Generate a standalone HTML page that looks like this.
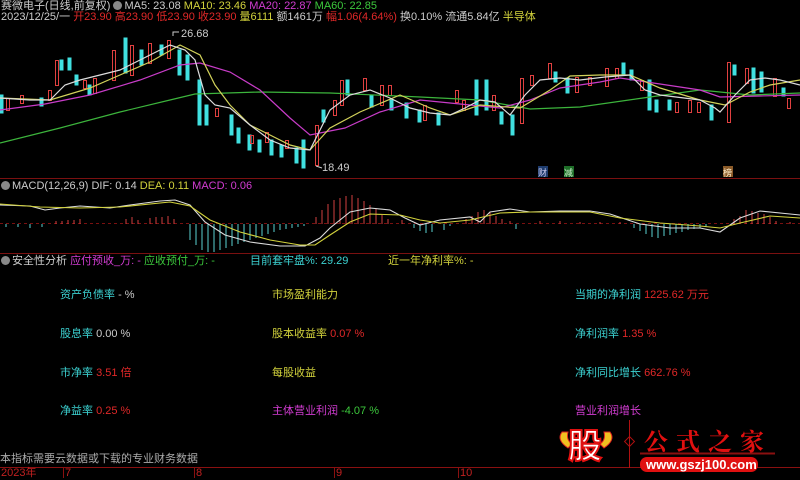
<!DOCTYPE html>
<html><head><meta charset="utf-8"><style>
*{margin:0;padding:0}
body{width:800px;height:478px;background:#000;overflow:hidden;position:relative;font-family:"Liberation Sans","Noto Sans CJK SC",sans-serif;font-size:11px;color:#ccc}
.t{position:absolute;white-space:nowrap;line-height:13px}
.c{color:#3cd2d2}.y{color:#d2d23c}.r{color:#e02828}.m{color:#d23cd2}.g{color:#3cc83c}.w{color:#ccc}
.d{display:inline-block;width:9px;height:9px;border-radius:50%;background:#888;vertical-align:-1px;margin-right:2px}
</style></head><body>
<svg width="800" height="478" style="position:absolute;left:0;top:0">
<line x1="0" y1="178.5" x2="800" y2="178.5" stroke="#7a1010"/>
<line x1="0" y1="253.5" x2="800" y2="253.5" stroke="#7a1010"/>
<line x1="0" y1="467.5" x2="800" y2="467.5" stroke="#8a1010"/>
<g stroke="#8a1010"><line x1="63.5" y1="467" x2="63.5" y2="478"/><line x1="194.5" y1="467" x2="194.5" y2="478"/><line x1="334.5" y1="467" x2="334.5" y2="478"/><line x1="458.5" y1="467" x2="458.5" y2="478"/></g>
<!-- candles -->
<g stroke-width="1">
<g fill="#40e0e0" stroke="#40e0e0">
<rect x="0" y="95" width="3" height="18"/><rect x="40" y="98" width="3" height="8"/><rect x="60" y="60" width="3" height="10"/><rect x="68" y="58" width="3" height="12"/>
<rect x="75" y="75" width="3" height="10"/><rect x="88" y="85" width="3" height="10"/><rect x="124" y="38" width="3" height="35"/><rect x="140" y="50" width="3" height="15"/>
<rect x="160" y="45" width="3" height="10"/><rect x="178" y="50" width="3" height="25"/><rect x="186" y="55" width="3" height="25"/><rect x="198" y="80" width="3" height="45"/>
<rect x="205" y="105" width="3" height="20"/><rect x="230" y="115" width="3" height="20"/><rect x="237" y="128" width="3" height="15"/><rect x="248" y="135" width="3" height="15"/>
<rect x="258" y="140" width="3" height="12"/><rect x="270" y="140" width="3" height="15"/><rect x="280" y="145" width="3" height="12"/><rect x="295" y="148" width="3" height="15"/>
<rect x="302" y="140" width="3" height="28"/><rect x="322" y="110" width="3" height="12"/><rect x="346" y="80" width="3" height="15"/><rect x="370" y="95" width="3" height="12"/>
<rect x="390" y="100" width="3" height="10"/><rect x="405" y="103" width="3" height="15"/><rect x="418" y="110" width="3" height="12"/><rect x="437" y="113" width="3" height="12"/>
<rect x="475" y="80" width="3" height="35"/><rect x="485" y="80" width="3" height="30"/><rect x="500" y="112" width="3" height="12"/><rect x="511" y="115" width="3" height="20"/>
<rect x="554" y="72" width="3" height="10"/><rect x="566" y="78" width="3" height="15"/><rect x="622" y="63" width="3" height="12"/><rect x="630" y="70" width="3" height="10"/>
<rect x="648" y="80" width="3" height="30"/><rect x="655" y="100" width="3" height="12"/><rect x="668" y="100" width="3" height="10"/><rect x="710" y="105" width="3" height="15"/>
<rect x="733" y="65" width="3" height="10"/><rect x="752" y="68" width="3" height="25"/><rect x="760" y="72" width="3" height="20"/><rect x="782" y="88" width="3" height="8"/>
</g>
<g fill="none" stroke="#e04040">
<rect x="6.5" y="98.5" width="3" height="12"/><rect x="20.5" y="95.5" width="3" height="8"/><rect x="48.5" y="90.5" width="3" height="10"/><rect x="55.5" y="60.5" width="3" height="25"/>
<rect x="83.5" y="80.5" width="3" height="8"/><rect x="93.5" y="78.5" width="3" height="15"/><rect x="112.5" y="50.5" width="3" height="30"/><rect x="130.5" y="45.5" width="3" height="30"/>
<rect x="148.5" y="43.5" width="3" height="20"/><rect x="167.5" y="40.5" width="3" height="18"/><rect x="215.5" y="108.5" width="3" height="8"/><rect x="250.5" y="135.5" width="3" height="8"/>
<rect x="265.5" y="132.5" width="3" height="10"/><rect x="285.5" y="140.5" width="3" height="8"/><rect x="315.5" y="125.5" width="3" height="40"/><rect x="333.5" y="100.5" width="3" height="15"/>
<rect x="340.5" y="80.5" width="3" height="25"/><rect x="363.5" y="78.5" width="3" height="12"/><rect x="380.5" y="85.5" width="3" height="20"/><rect x="388.5" y="85.5" width="3" height="10"/>
<rect x="423.5" y="105.5" width="3" height="15"/><rect x="455.5" y="90.5" width="3" height="12"/><rect x="462.5" y="100.5" width="3" height="10"/><rect x="492.5" y="95.5" width="3" height="15"/>
<rect x="520.5" y="78.5" width="3" height="45"/><rect x="530.5" y="75.5" width="3" height="10"/><rect x="548.5" y="63.5" width="3" height="15"/><rect x="575.5" y="77.5" width="3" height="15"/>
<rect x="588.5" y="77.5" width="3" height="8"/><rect x="605.5" y="68.5" width="3" height="18"/><rect x="615.5" y="68.5" width="3" height="10"/><rect x="640.5" y="80.5" width="3" height="10"/>
<rect x="675.5" y="102.5" width="3" height="10"/><rect x="688.5" y="100.5" width="3" height="12"/><rect x="697.5" y="102.5" width="3" height="10"/><rect x="727.5" y="62.5" width="3" height="60"/>
<rect x="745.5" y="68.5" width="3" height="15"/><rect x="773.5" y="78.5" width="3" height="18"/><rect x="787.5" y="98.5" width="3" height="10"/>
</g>
</g>
<g fill="none" stroke-width="1.2">
<polyline stroke="#3cb43c" points="0,143 60,128 120,112 170,100 195,94 260,92 330,93 420,97 480,100 530,109 580,107 650,97 700,90 750,95 800,93"/>
<polyline stroke="#c83cc8" points="0,110 45,104 90,95 140,80 180,65 200,63 230,72 260,90 290,118 310,135 345,128 380,112 420,100 460,104 500,108 530,100 560,88 600,82 620,78 660,84 700,90 720,97 760,96 800,95"/>
<polyline stroke="#d2d25a" points="0,98 50,100 90,88 120,75 150,62 180,45 200,55 215,85 230,105 250,125 270,135 290,145 310,150 330,128 360,112 400,95 430,108 450,115 480,105 520,108 550,90 570,76 600,75 630,75 660,88 700,100 725,105 750,92 770,85 800,80"/>
<polyline stroke="#dcdcdc" points="0,98 30,100 50,100 65,85 80,80 100,75 120,70 150,55 170,45 185,50 195,60 205,95 215,105 230,108 250,125 270,140 290,148 310,150 320,130 330,110 350,95 370,90 390,98 410,108 430,113 450,115 465,108 480,100 495,102 510,115 525,95 540,80 560,78 580,80 605,77 630,75 645,90 660,95 700,100 715,108 720,112 735,95 750,80 765,78 780,80 800,85"/>
</g>
<g stroke="#ccc" fill="none"><polyline points="173,36 173,32 179,32"/><polyline points="316,166 322,168"/></g>
<text x="181" y="37" fill="#ccc" font-size="11" font-family="Liberation Sans">26.68</text>
<text x="322" y="171" fill="#ccc" font-size="11" font-family="Liberation Sans">18.49</text>
<rect x="538" y="166" width="10" height="11" fill="#1e3c6e"/><text x="538" y="176" fill="#cce" font-size="9" font-family="Noto Sans CJK SC">财</text>
<rect x="564" y="166" width="10" height="11" fill="#1e6e28"/><text x="564" y="176" fill="#cec" font-size="9" font-family="Noto Sans CJK SC">减</text>
<rect x="723" y="166" width="10" height="11" fill="#8a5a28"/><text x="723" y="176" fill="#fec" font-size="9" font-family="Noto Sans CJK SC">榜</text>
<!-- MACD -->
<line x1="0" y1="223.5" x2="800" y2="223.5" stroke="#7a1010" stroke-dasharray="3,3"/>
<path stroke="#5ad2d2" d="M6 224V227M18 224V227M30 224V228M42 224V227M190 224V240M196 224V245M202 224V250M208 224V252M214 224V252M220 224V250M226 224V248M232 224V246M238 224V244M244 224V242M250 224V240M256 224V238M262 224V236M268 224V234M274 224V232M280 224V230M286 224V229M292 224V228M298 224V227M304 224V226M414 224V228M420 224V231M426 224V233M432 224V232M444 224V230M450 224V226M516 224V229M634 224V228M640 224V231M646 224V234M652 224V237M658 224V238M664 224V236M670 224V235M676 224V233M682 224V232M688 224V230M694 224V229M700 224V228M706 224V227"/>
<path stroke="#d24040" d="M56 224V221M62 224V221M68 224V220M74 224V220M80 224V219M126 224V219M132 224V217M138 224V220M150 224V218M156 224V217M162 224V217M168 224V216M174 224V219M316 224V217M322 224V210M328 224V204M334 224V200M340 224V198M346 224V196M352 224V195M358 224V198M364 224V201M370 224V205M376 224V209M382 224V215M388 224V219M402 224V220M466 224V219M472 224V216M478 224V212M484 224V210M490 224V212M496 224V216M502 224V219M510 224V221M540 224V221M560 224V221M580 224V222M600 224V222M620 224V222M734 224V219M740 224V216M746 224V210M752 224V211M758 224V213M764 224V214M770 224V217M776 224V221M790 224V222"/>
<g fill="none" stroke-width="1.1">
<polyline stroke="#dcdcdc" points="0,205 30,206 45,210 60,208 80,206 110,208 130,205 160,201 175,200 190,205 205,222 225,235 250,242 280,246 305,246 320,238 330,228 350,212 370,208 390,210 405,218 420,225 440,220 470,217 480,222 490,212 510,209 530,212 560,211 590,211 610,214 640,224 670,228 700,228 720,232 740,218 760,211 790,214 800,215"/>
<polyline stroke="#d2d23c" points="0,204 40,207 80,208 120,207 170,202 190,206 210,220 240,232 270,240 300,245 315,245 330,235 350,222 370,214 400,215 420,220 440,223 470,220 500,213 530,212 560,212 590,212 620,218 660,223 700,226 720,228 740,223 770,216 800,218"/>
</g>
<!-- logo -->
<line x1="629.5" y1="420" x2="629.5" y2="468" stroke="#b01010"/>
<rect x="626" y="438" width="7" height="7" fill="none" stroke="#b01010" transform="rotate(45 629.5 441.5)"/>
<line x1="640" y1="453.5" x2="775" y2="453.5" stroke="#8a1010" stroke-width="2"/>
<rect x="640" y="457" width="118" height="15" rx="7" fill="#e01010"/>
<path d="M562 432 q-6 8 6 16 l4 -4 q-6 -4 -4 -12z M610 432 q6 8 -6 16 l-4 -4 q6 -4 4 -12z" fill="#f0c020" stroke="#e02020"/>
</svg>
<div class="t" style="left:1px;top:0px"><span class="w">赛微电子(日线,前复权)</span> <span class="d"></span><span class="w">MA5: 23.08</span> <span class="y">MA10: 23.46</span> <span class="m">MA20: 22.87</span> <span class="g">MA60: 22.85</span></div>
<div class="t" style="left:1px;top:11px"><span class="w">2023/12/25/一</span> <span class="r">开23.90 高23.90 低23.90 收23.90</span> <span class="y">量6111</span> <span class="w">额1461万</span> <span class="r">幅1.06(4.64%)</span> <span class="w">换0.10% 流通5.84亿</span> <span class="y">半导体</span></div>
<div class="t" style="left:1px;top:180px"><span class="d"></span><span class="w">MACD(12,26,9) DIF: 0.14</span> <span class="y">DEA: 0.11</span> <span class="m">MACD: 0.06</span></div>
<div class="t" style="left:1px;top:255px"><span class="d"></span><span class="w">安全性分析</span> <span class="m">应付预收_万: -</span> <span class="g">应收预付_万: -</span></div>
<div class="t c" style="left:250px;top:255px">目前套牢盘%: 29.29</div>
<div class="t y" style="left:388px;top:255px">近一年净利率%: -</div>
<div class="t" style="left:60px;top:289px"><span class="c">资产负债率</span> <span class="w">- %</span></div>
<div class="t" style="left:60px;top:328px"><span class="c">股息率</span> <span class="w">0.00 %</span></div>
<div class="t" style="left:60px;top:367px"><span class="c">市净率</span> <span class="r">3.51 倍</span></div>
<div class="t" style="left:60px;top:405px"><span class="c">净益率</span> <span class="r">0.25 %</span></div>
<div class="t y" style="left:272px;top:289px">市场盈利能力</div>
<div class="t" style="left:272px;top:328px"><span class="y">股本收益率</span> <span class="r">0.07 %</span></div>
<div class="t y" style="left:272px;top:367px">每股收益</div>
<div class="t" style="left:272px;top:405px"><span class="m">主体营业利润</span> <span class="g">-4.07 %</span></div>
<div class="t" style="left:575px;top:289px"><span class="c">当期的净利润</span> <span class="r">1225.62 万元</span></div>
<div class="t" style="left:575px;top:328px"><span class="c">净利润率</span> <span class="r">1.35 %</span></div>
<div class="t" style="left:575px;top:367px"><span class="c">净利同比增长</span> <span class="r">662.76 %</span></div>
<div class="t m" style="left:575px;top:405px">营业利润增长</div>
<div class="t w" style="left:0;top:453px;color:#aaa">本指标需要云数据或下载的专业财务数据</div>
<div class="t r" style="left:1px;top:467px;color:#c02020">2023年</div>
<div class="t" style="left:65px;top:467px;color:#c02020">7</div>
<div class="t" style="left:196px;top:467px;color:#c02020">8</div>
<div class="t" style="left:336px;top:467px;color:#c02020">9</div>
<div class="t" style="left:460px;top:467px;color:#c02020">10</div>
<div class="t" style="left:568px;top:424px;font-size:34px;line-height:40px;font-weight:bold;color:#fff;-webkit-text-stroke:2px #e01010;font-family:'Noto Sans CJK SC',sans-serif">股</div>
<div class="t" style="left:644px;top:426px;font-size:24px;line-height:28px;color:#e01010;letter-spacing:8px;font-family:'Noto Serif CJK SC',serif;font-weight:bold">公式之家</div>
<div class="t" style="left:646px;top:458px;font-size:13px;color:#fff;font-weight:bold">www.gszj100.com</div>
</body></html>
